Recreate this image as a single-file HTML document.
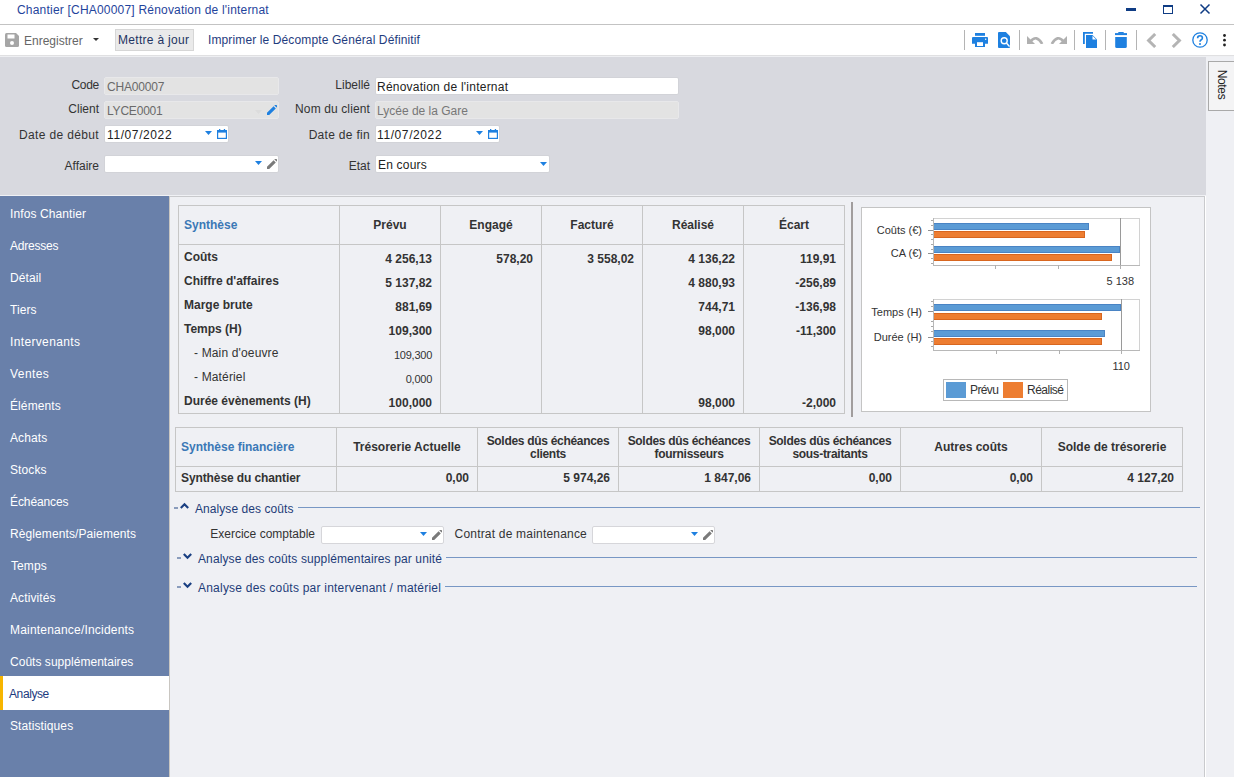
<!DOCTYPE html>
<html><head><meta charset="utf-8">
<style>
*{margin:0;padding:0;box-sizing:border-box}
html,body{width:1234px;height:777px;overflow:hidden;background:#fff;font-family:"Liberation Sans",sans-serif;font-size:12px;color:#333}
.a{position:absolute}
.t{position:absolute;white-space:nowrap}
.inp{position:absolute;height:17px;border:1px solid #d2d3d8;background:#fff;border-radius:2px}
.inp2{border-color:#d6d6da}
.dis{background:#e3e3e3;border-color:#e8e8ea}
</style></head><body>

<div class="t" style="top:3px;font-size:12px;line-height:14px;color:#1f449c;letter-spacing:0.2px;left:17px;">Chantier [CHA00007] Rénovation de l'internat</div>
<div class="a" style="left:1126px;top:8px;width:10px;height:3px;background:#0f3c84;"></div>
<div class="a" style="left:1163px;top:5px;width:10px;height:9px;border:1px solid #0f3c84;border-top-width:2px"></div>
<svg class="a" style="left:1199px;top:3px" width="12" height="12" viewBox="0 0 12 12"><path d="M1.5 1.5L10.5 10.5M10.5 1.5L1.5 10.5" stroke="#0f3c84" stroke-width="1.5"/></svg>
<div class="a" style="left:0px;top:24px;width:1234px;height:1px;background:#c3c3c3;"></div>
<svg class="a" style="left:5px;top:33px" width="14" height="14" viewBox="0 0 14 14"><path d="M0 1.5Q0 0 1.5 0H11L14 3V12.5Q14 14 12.5 14H1.5Q0 14 0 12.5Z" fill="#a6a6a6"/><rect x="2.5" y="1.5" width="7" height="4" fill="#fff"/><circle cx="7" cy="10" r="2" fill="#fff"/></svg>
<div class="t" style="top:34px;font-size:12px;line-height:14px;color:#666;left:24px;">Enregistrer</div>
<svg class="a" style="left:93px;top:38px" width="6" height="3" viewBox="0 0 6 3"><path d="M0 0H6L3 3Z" fill="#333"/></svg>
<div class="a" style="left:115px;top:29px;width:79px;height:22px;background:#eaeaea;border:1px solid #d6d6d6"></div>
<div class="t" style="top:33px;font-size:12px;line-height:14px;color:#1e3462;letter-spacing:0.3px;left:118px;">Mettre à jour</div>
<div class="t" style="top:33px;font-size:12px;line-height:14px;color:#1f3c7e;letter-spacing:0.12px;left:208px;">Imprimer le Décompte Général Définitif</div>
<div class="a" style="left:964px;top:30px;width:1px;height:20px;background:#b4b4b4;"></div>
<div class="a" style="left:1019px;top:30px;width:1px;height:20px;background:#b4b4b4;"></div>
<div class="a" style="left:1074px;top:30px;width:1px;height:20px;background:#b4b4b4;"></div>
<div class="a" style="left:1105px;top:30px;width:1px;height:20px;background:#b4b4b4;"></div>
<div class="a" style="left:1136px;top:30px;width:1px;height:20px;background:#b4b4b4;"></div>
<svg class="a" style="left:972px;top:33px" width="16" height="14" viewBox="0 0 16 14"><rect x="3" y="0" width="10" height="2.8" fill="#1e80e0"/><path d="M0 5Q0 4 1 4H15Q16 4 16 5V10.8H0Z" fill="#1e80e0"/><rect x="3" y="8" width="10" height="6" fill="#1e80e0"/><rect x="5" y="9.2" width="6" height="3.8" fill="#fff"/><rect x="13" y="5.5" width="1.3" height="1.5" fill="#d8e8f8"/></svg>
<svg class="a" style="left:998px;top:32px" width="12" height="16" viewBox="0 0 12 16"><path d="M0 1Q0 0 1 0H7.8L12 4.2V15Q12 16 11 16H1Q0 16 0 15Z" fill="#1e80e0"/><circle cx="6.2" cy="8.7" r="3" fill="none" stroke="#fff" stroke-width="1.4"/><path d="M8.4 10.9L11.6 14.6" stroke="#fff" stroke-width="1.5"/></svg>
<svg class="a" style="left:1027px;top:36px" width="17" height="8" viewBox="0 0 17 8"><path d="M0 0L0 8L8 8Z" fill="#b0b0b0"/><path d="M3.5 5.5Q9.5 -2 15.2 8" fill="none" stroke="#b0b0b0" stroke-width="2.6"/></svg>
<svg class="a" style="left:1050px;top:36px" width="17" height="8" viewBox="0 0 17 8"><path d="M17 0L17 8L9 8Z" fill="#b0b0b0"/><path d="M13.5 5.5Q7.5 -2 1.8 8" fill="none" stroke="#b0b0b0" stroke-width="2.6"/></svg>
<svg class="a" style="left:1083px;top:32px" width="14" height="16" viewBox="0 0 14 16"><path d="M0 0H10V1.7H1.8V12H0Z" fill="#1e80e0"/><path d="M3 3H9.5L14 7.5V16H3Z" fill="#1e80e0"/><path d="M9.5 3.8V7.5H13.2Z" fill="#fff"/></svg>
<svg class="a" style="left:1115px;top:32px" width="12" height="16" viewBox="0 0 12 16"><rect x="0" y="1.1" width="12" height="2" fill="#1e80e0"/><rect x="3.2" y="0" width="5.6" height="1.6" rx="0.6" fill="#1e80e0"/><path d="M0.2 5H11.8V14.5Q11.8 16 10.3 16H1.7Q0.2 16 0.2 14.5Z" fill="#1e80e0"/></svg>
<svg class="a" style="left:1146px;top:33px" width="11" height="15" viewBox="0 0 11 15"><path d="M9.2 1L2.6 7.5L9.2 14" fill="none" stroke="#b4b4b4" stroke-width="3"/></svg>
<svg class="a" style="left:1171px;top:33px" width="11" height="15" viewBox="0 0 11 15"><path d="M1.8 1L8.4 7.5L1.8 14" fill="none" stroke="#b4b4b4" stroke-width="3"/></svg>
<svg class="a" style="left:1192px;top:32px" width="16" height="16" viewBox="0 0 16 16"><circle cx="8" cy="8" r="7.2" fill="none" stroke="#1e80e0" stroke-width="1.3"/><path d="M5.6 6.2Q5.6 3.8 8 3.8Q10.4 3.8 10.4 6Q10.4 7.3 9 8Q8 8.6 8 9.8" fill="none" stroke="#1e80e0" stroke-width="1.6"/><circle cx="8" cy="12" r="1" fill="#1e80e0"/></svg>
<svg class="a" style="left:1221.5px;top:34px" width="5" height="13" viewBox="0 0 5 13"><circle cx="2.5" cy="1.5" r="1.4" fill="#222"/><circle cx="2.5" cy="6.2" r="1.4" fill="#222"/><circle cx="2.5" cy="11" r="1.4" fill="#222"/></svg>
<div class="a" style="left:0px;top:55px;width:1234px;height:1px;background:#e0e0e2;"></div>
<div class="a" style="left:0px;top:56px;width:1234px;height:1px;background:#eeeff2;"></div>
<div class="a" style="left:0px;top:57px;width:1206px;height:138px;background:#d8d9df;"></div>
<div class="a" style="left:1206px;top:57px;width:28px;height:720px;background:#eff0f4;"></div>
<div class="a" style="left:1208px;top:61px;width:30px;height:50px;background:#f4f4f5;border:1px solid #a9a9a9"></div>
<div class="t" style="left:1203px;top:77px;width:36px;height:15px;line-height:15px;transform:rotate(90deg);color:#222;font-size:12px;text-align:center;letter-spacing:-0.35px">Notes</div>
<div class="t" style="top:78px;font-size:12px;line-height:14px;color:#333;letter-spacing:-0.3px;left:9px;width:90px;text-align:right;">Code</div>
<div class="inp dis " style="left:104px;top:77px;width:175px;height:18px"></div>
<div class="t" style="top:80px;font-size:12px;line-height:14px;color:#6a6a6a;letter-spacing:-0.2px;left:107px;">CHA00007</div>
<div class="t" style="top:102px;font-size:12px;line-height:14px;color:#333;left:9px;width:90px;text-align:right;">Client</div>
<div class="inp dis " style="left:104px;top:101px;width:175px;height:18px"></div>
<div class="t" style="top:104px;font-size:12px;line-height:14px;color:#6a6a6a;letter-spacing:-0.2px;left:107px;">LYCE0001</div>
<svg class="a" style="left:267px;top:105px" width="10" height="10" viewBox="0 0 10 10"><path d="M0 10V7.8L6.6 1.2L8.8 3.4L2.2 10Z M7.4 0.4L8.2 -0.4Q8.6 -0.8 9 -0.4L10.4 1Q10.8 1.4 10.4 1.8L9.6 2.6Z" fill="#1e80e0"/></svg>
<svg class="a" style="left:255px;top:110px" width="7" height="4" viewBox="0 0 7 4"><path d="M0 0H7L3.5 4Z" fill="#dcdcdc"/></svg>
<div class="t" style="top:128px;font-size:12px;line-height:14px;color:#333;letter-spacing:0.35px;left:9px;width:90px;text-align:right;">Date de début</div>
<div class="inp " style="left:104px;top:125px;width:125px;height:18px"></div>
<div class="t" style="top:128px;font-size:12px;line-height:14px;color:#222;letter-spacing:0.6px;left:107px;">11/07/2022</div>
<svg class="a" style="left:205px;top:131px" width="7" height="4" viewBox="0 0 7 4"><path d="M0 0H7L3.5 4Z" fill="#1e80e0"/></svg>
<svg class="a" style="left:217px;top:129px" width="10" height="10" viewBox="0 0 10 10"><rect x="0.6" y="1.6" width="8.8" height="7.8" fill="none" stroke="#1e80e0" stroke-width="1.2"/><rect x="0" y="1" width="10" height="2.6" fill="#1e80e0"/><rect x="2" y="0" width="1.3" height="1.5" fill="#1e80e0"/><rect x="6.8" y="0" width="1.3" height="1.5" fill="#1e80e0"/></svg>
<div class="t" style="top:159px;font-size:12px;line-height:14px;color:#333;left:9px;width:90px;text-align:right;">Affaire</div>
<div class="inp " style="left:104px;top:155px;width:175px;height:18px"></div>
<svg class="a" style="left:255px;top:161px" width="7" height="4" viewBox="0 0 7 4"><path d="M0 0H7L3.5 4Z" fill="#1e80e0"/></svg>
<svg class="a" style="left:267px;top:159px" width="10" height="10" viewBox="0 0 10 10"><path d="M0 10V7.8L6.6 1.2L8.8 3.4L2.2 10Z M7.4 0.4L8.2 -0.4Q8.6 -0.8 9 -0.4L10.4 1Q10.8 1.4 10.4 1.8L9.6 2.6Z" fill="#7a7a7a"/></svg>
<div class="t" style="top:78px;font-size:12px;line-height:14px;color:#333;left:280px;width:90px;text-align:right;">Libellé</div>
<div class="inp " style="left:375px;top:77px;width:304px;height:18px"></div>
<div class="t" style="top:80px;font-size:12px;line-height:14px;color:#222;letter-spacing:0.23px;left:377px;">Rénovation de l'internat</div>
<div class="t" style="top:102px;font-size:12px;line-height:14px;color:#333;letter-spacing:0.12px;left:250px;width:120px;text-align:right;">Nom du client</div>
<div class="inp dis " style="left:375px;top:101px;width:304px;height:18px"></div>
<div class="t" style="top:104px;font-size:12px;line-height:14px;color:#777;left:377px;">Lycée de la Gare</div>
<div class="t" style="top:128px;font-size:12px;line-height:14px;color:#333;letter-spacing:0.3px;left:280px;width:90px;text-align:right;">Date de fin</div>
<div class="inp " style="left:375px;top:125px;width:125px;height:18px"></div>
<div class="t" style="top:128px;font-size:12px;line-height:14px;color:#222;letter-spacing:0.6px;left:377px;">11/07/2022</div>
<svg class="a" style="left:476px;top:131px" width="7" height="4" viewBox="0 0 7 4"><path d="M0 0H7L3.5 4Z" fill="#1e80e0"/></svg>
<svg class="a" style="left:488px;top:129px" width="10" height="10" viewBox="0 0 10 10"><rect x="0.6" y="1.6" width="8.8" height="7.8" fill="none" stroke="#1e80e0" stroke-width="1.2"/><rect x="0" y="1" width="10" height="2.6" fill="#1e80e0"/><rect x="2" y="0" width="1.3" height="1.5" fill="#1e80e0"/><rect x="6.8" y="0" width="1.3" height="1.5" fill="#1e80e0"/></svg>
<div class="t" style="top:159px;font-size:12px;line-height:14px;color:#333;left:280px;width:90px;text-align:right;">Etat</div>
<div class="inp " style="left:375px;top:155px;width:175px;height:18px"></div>
<div class="t" style="top:158px;font-size:12px;line-height:14px;color:#222;letter-spacing:0.2px;left:378px;">En cours</div>
<svg class="a" style="left:540px;top:162px" width="7" height="4" viewBox="0 0 7 4"><path d="M0 0H7L3.5 4Z" fill="#1e80e0"/></svg>
<div class="a" style="left:0px;top:195px;width:1206px;height:1px;background:#f0f1f5;"></div>
<div class="a" style="left:0px;top:196px;width:169px;height:581px;background:#6980aa;"></div>
<div class="a" style="left:169px;top:196px;width:1036px;height:581px;background:#eff0f4;border-top:1px solid #c9cacd;border-right:1px solid #c9cacd"></div>
<div class="a" style="left:169px;top:196px;width:1px;height:581px;background:#c9c6c1;"></div>
<div class="t" style="top:207px;font-size:12px;line-height:14px;color:#fff;letter-spacing:0.1px;left:10px;">Infos Chantier</div>
<div class="t" style="top:239px;font-size:12px;line-height:14px;color:#fff;letter-spacing:-0.21px;left:10px;">Adresses</div>
<div class="t" style="top:271px;font-size:12px;line-height:14px;color:#fff;letter-spacing:0.1px;left:10px;">Détail</div>
<div class="t" style="top:303px;font-size:12px;line-height:14px;color:#fff;letter-spacing:0.1px;left:10px;">Tiers</div>
<div class="t" style="top:335px;font-size:12px;line-height:14px;color:#fff;letter-spacing:0.35px;left:10px;">Intervenants</div>
<div class="t" style="top:367px;font-size:12px;line-height:14px;color:#fff;letter-spacing:0.43px;left:10px;">Ventes</div>
<div class="t" style="top:399px;font-size:12px;line-height:14px;color:#fff;letter-spacing:0.1px;left:10px;">Éléments</div>
<div class="t" style="top:431px;font-size:12px;line-height:14px;color:#fff;letter-spacing:0.1px;left:10px;">Achats</div>
<div class="t" style="top:463px;font-size:12px;line-height:14px;color:#fff;letter-spacing:0.1px;left:10px;">Stocks</div>
<div class="t" style="top:495px;font-size:12px;line-height:14px;color:#fff;letter-spacing:-0.1px;left:10px;">Échéances</div>
<div class="t" style="top:527px;font-size:12px;line-height:14px;color:#fff;letter-spacing:0.1px;left:10px;">Règlements/Paiements</div>
<div class="t" style="top:559px;font-size:12px;line-height:14px;color:#fff;letter-spacing:0.1px;left:11px;">Temps</div>
<div class="t" style="top:591px;font-size:12px;line-height:14px;color:#fff;letter-spacing:0.1px;left:10px;">Activités</div>
<div class="t" style="top:623px;font-size:12px;line-height:14px;color:#fff;letter-spacing:0.2px;left:10px;">Maintenance/Incidents</div>
<div class="t" style="top:655px;font-size:12px;line-height:14px;color:#fff;letter-spacing:0.03px;left:10px;">Coûts supplémentaires</div>
<div class="a" style="left:0px;top:676px;width:169px;height:34px;background:#fff;"></div>
<div class="a" style="left:0px;top:676px;width:3px;height:34px;background:#f7b500;"></div>
<div class="t" style="top:687px;font-size:12px;line-height:14px;color:#1c3a7e;letter-spacing:-0.4px;left:9px;">Analyse</div>
<div class="t" style="top:719px;font-size:12px;line-height:14px;color:#fff;letter-spacing:0.1px;left:10px;">Statistiques</div>
<div class="a" style="left:178px;top:205px;width:667px;height:209px;border:1px solid #c6c6c6"></div>
<div class="a" style="left:339px;top:205px;width:1px;height:209px;background:#c6c6c6;"></div>
<div class="a" style="left:440px;top:205px;width:1px;height:209px;background:#c6c6c6;"></div>
<div class="a" style="left:541px;top:205px;width:1px;height:209px;background:#c6c6c6;"></div>
<div class="a" style="left:642px;top:205px;width:1px;height:209px;background:#c6c6c6;"></div>
<div class="a" style="left:743px;top:205px;width:1px;height:209px;background:#c6c6c6;"></div>
<div class="a" style="left:178px;top:244px;width:667px;height:1px;background:#c6c6c6;"></div>
<div class="t" style="top:218px;font-size:12px;line-height:14px;color:#3b78b6;font-weight:bold;left:184px;">Synthèse</div>
<div class="t" style="top:218px;font-size:12px;line-height:14px;color:#333;font-weight:bold;left:340.0px;width:100px;text-align:center;">Prévu</div>
<div class="t" style="top:218px;font-size:12px;line-height:14px;color:#333;font-weight:bold;left:441.0px;width:100px;text-align:center;">Engagé</div>
<div class="t" style="top:218px;font-size:12px;line-height:14px;color:#333;font-weight:bold;left:542.0px;width:100px;text-align:center;">Facturé</div>
<div class="t" style="top:218px;font-size:12px;line-height:14px;color:#333;font-weight:bold;left:643.0px;width:100px;text-align:center;">Réalisé</div>
<div class="t" style="top:218px;font-size:12px;line-height:14px;color:#333;font-weight:bold;left:744.0px;width:100px;text-align:center;">Écart</div>
<div class="t" style="top:250px;font-size:12px;line-height:14px;color:#333;font-weight:bold;left:184px;">Coûts</div>
<div class="t" style="top:252px;font-size:12px;line-height:14px;color:#333;font-weight:bold;left:342px;width:90px;text-align:right;">4 256,13</div>
<div class="t" style="top:252px;font-size:12px;line-height:14px;color:#333;font-weight:bold;left:443px;width:90px;text-align:right;">578,20</div>
<div class="t" style="top:252px;font-size:12px;line-height:14px;color:#333;font-weight:bold;left:544px;width:90px;text-align:right;">3 558,02</div>
<div class="t" style="top:252px;font-size:12px;line-height:14px;color:#333;font-weight:bold;left:645px;width:90px;text-align:right;">4 136,22</div>
<div class="t" style="top:252px;font-size:12px;line-height:14px;color:#333;font-weight:bold;left:746px;width:90px;text-align:right;">119,91</div>
<div class="t" style="top:274px;font-size:12px;line-height:14px;color:#333;font-weight:bold;left:184px;">Chiffre d'affaires</div>
<div class="t" style="top:276px;font-size:12px;line-height:14px;color:#333;font-weight:bold;left:342px;width:90px;text-align:right;">5 137,82</div>
<div class="t" style="top:276px;font-size:12px;line-height:14px;color:#333;font-weight:bold;left:645px;width:90px;text-align:right;">4 880,93</div>
<div class="t" style="top:276px;font-size:12px;line-height:14px;color:#333;font-weight:bold;left:746px;width:90px;text-align:right;">-256,89</div>
<div class="t" style="top:298px;font-size:12px;line-height:14px;color:#333;font-weight:bold;left:184px;">Marge brute</div>
<div class="t" style="top:300px;font-size:12px;line-height:14px;color:#333;font-weight:bold;left:342px;width:90px;text-align:right;">881,69</div>
<div class="t" style="top:300px;font-size:12px;line-height:14px;color:#333;font-weight:bold;left:645px;width:90px;text-align:right;">744,71</div>
<div class="t" style="top:300px;font-size:12px;line-height:14px;color:#333;font-weight:bold;left:746px;width:90px;text-align:right;">-136,98</div>
<div class="t" style="top:322px;font-size:12px;line-height:14px;color:#333;font-weight:bold;left:184px;">Temps (H)</div>
<div class="t" style="top:324px;font-size:12px;line-height:14px;color:#333;font-weight:bold;left:342px;width:90px;text-align:right;">109,300</div>
<div class="t" style="top:324px;font-size:12px;line-height:14px;color:#333;font-weight:bold;left:645px;width:90px;text-align:right;">98,000</div>
<div class="t" style="top:324px;font-size:12px;line-height:14px;color:#333;font-weight:bold;left:746px;width:90px;text-align:right;">-11,300</div>
<div class="t" style="top:346px;font-size:12px;line-height:14px;color:#333;letter-spacing:0.15px;left:194px;">- Main d'oeuvre</div>
<div class="t" style="top:349px;font-size:11px;line-height:13px;color:#333;letter-spacing:-0.25px;left:342px;width:90px;text-align:right;">109,300</div>
<div class="t" style="top:370px;font-size:12px;line-height:14px;color:#333;letter-spacing:0.15px;left:194px;">- Matériel</div>
<div class="t" style="top:373px;font-size:11px;line-height:13px;color:#333;letter-spacing:-0.25px;left:342px;width:90px;text-align:right;">0,000</div>
<div class="t" style="top:394px;font-size:12px;line-height:14px;color:#333;font-weight:bold;left:184px;">Durée évènements (H)</div>
<div class="t" style="top:396px;font-size:12px;line-height:14px;color:#333;font-weight:bold;left:342px;width:90px;text-align:right;">100,000</div>
<div class="t" style="top:396px;font-size:12px;line-height:14px;color:#333;font-weight:bold;left:645px;width:90px;text-align:right;">98,000</div>
<div class="t" style="top:396px;font-size:12px;line-height:14px;color:#333;font-weight:bold;left:746px;width:90px;text-align:right;">-2,000</div>
<div class="a" style="left:851px;top:202px;width:2px;height:215px;background:#a19d9d;"></div>
<div class="a" style="left:861px;top:207px;width:290px;height:205px;border:1px solid #c4c4c4"></div>
<div class="a" style="left:862px;top:208px;width:288px;height:203px;background:#fff"></div>
<div class="a" style="left:933px;top:218px;width:207px;height:48px;border:1px solid #d2d2d2"></div>
<div class="a" style="left:933px;top:218px;width:1px;height:48px;background:#b8b8b8;"></div>
<div class="a" style="left:933px;top:265px;width:207px;height:1px;background:#b8b8b8;"></div>
<div class="a" style="left:934px;top:219px;width:205px;height:46px;background:#fff"></div>
<div class="a" style="left:1120px;top:218px;width:1px;height:48px;background:#9a9a9a;"></div>
<div class="a" style="left:934px;top:223px;width:155px;height:7px;background:#5b9bd5;border:1px solid #4a84c4;border-left:0"></div>
<div class="a" style="left:934px;top:231px;width:151px;height:7px;background:#ed7d31;border:1px solid #d8661f;border-left:0"></div>
<div class="a" style="left:934px;top:246px;width:186px;height:7px;background:#5b9bd5;border:1px solid #4a84c4;border-left:0"></div>
<div class="a" style="left:934px;top:254px;width:178px;height:7px;background:#ed7d31;border:1px solid #d8661f;border-left:0"></div>
<div class="a" style="left:995px;top:265px;width:1px;height:4px;background:#b0b0b0;"></div>
<div class="a" style="left:1058px;top:265px;width:1px;height:4px;background:#b0b0b0;"></div>
<div class="a" style="left:1120px;top:265px;width:1px;height:4px;background:#b0b0b0;"></div>
<div class="a" style="left:931px;top:220px;width:2px;height:1px;background:#a8a8a8;"></div>
<div class="a" style="left:931px;top:225px;width:2px;height:1px;background:#a8a8a8;"></div>
<div class="a" style="left:931px;top:234px;width:2px;height:1px;background:#a8a8a8;"></div>
<div class="a" style="left:931px;top:239px;width:2px;height:1px;background:#a8a8a8;"></div>
<div class="a" style="left:931px;top:244px;width:2px;height:1px;background:#a8a8a8;"></div>
<div class="a" style="left:931px;top:249px;width:2px;height:1px;background:#a8a8a8;"></div>
<div class="a" style="left:931px;top:258px;width:2px;height:1px;background:#a8a8a8;"></div>
<div class="a" style="left:931px;top:263px;width:2px;height:1px;background:#a8a8a8;"></div>
<div class="a" style="left:928px;top:230px;width:5px;height:1px;background:#909090;"></div>
<div class="a" style="left:928px;top:253px;width:5px;height:1px;background:#909090;"></div>
<div class="t" style="top:224px;font-size:11px;line-height:13px;color:#333;left:842px;width:80px;text-align:right;">Coûts (€)</div>
<div class="t" style="top:247px;font-size:11px;line-height:13px;color:#333;left:842px;width:80px;text-align:right;">CA (€)</div>
<div class="t" style="top:275px;font-size:11px;line-height:13px;color:#333;left:1074px;width:60px;text-align:right;">5 138</div>
<div class="a" style="left:933px;top:299px;width:207px;height:52px;border:1px solid #d2d2d2"></div>
<div class="a" style="left:933px;top:299px;width:1px;height:52px;background:#b8b8b8;"></div>
<div class="a" style="left:933px;top:350px;width:207px;height:1px;background:#b8b8b8;"></div>
<div class="a" style="left:934px;top:300px;width:205px;height:50px;background:#fff"></div>
<div class="a" style="left:1121px;top:299px;width:1px;height:52px;background:#9a9a9a;"></div>
<div class="a" style="left:934px;top:304px;width:187px;height:7px;background:#5b9bd5;border:1px solid #4a84c4;border-left:0"></div>
<div class="a" style="left:934px;top:313px;width:168px;height:7px;background:#ed7d31;border:1px solid #d8661f;border-left:0"></div>
<div class="a" style="left:934px;top:330px;width:171px;height:7px;background:#5b9bd5;border:1px solid #4a84c4;border-left:0"></div>
<div class="a" style="left:934px;top:338px;width:168px;height:7px;background:#ed7d31;border:1px solid #d8661f;border-left:0"></div>
<div class="a" style="left:996px;top:350px;width:1px;height:4px;background:#b0b0b0;"></div>
<div class="a" style="left:1059px;top:350px;width:1px;height:4px;background:#b0b0b0;"></div>
<div class="a" style="left:1121px;top:350px;width:1px;height:4px;background:#b0b0b0;"></div>
<div class="a" style="left:931px;top:301px;width:2px;height:1px;background:#a8a8a8;"></div>
<div class="a" style="left:931px;top:306px;width:2px;height:1px;background:#a8a8a8;"></div>
<div class="a" style="left:931px;top:311px;width:2px;height:1px;background:#a8a8a8;"></div>
<div class="a" style="left:931px;top:321px;width:2px;height:1px;background:#a8a8a8;"></div>
<div class="a" style="left:931px;top:326px;width:2px;height:1px;background:#a8a8a8;"></div>
<div class="a" style="left:931px;top:331px;width:2px;height:1px;background:#a8a8a8;"></div>
<div class="a" style="left:931px;top:341px;width:2px;height:1px;background:#a8a8a8;"></div>
<div class="a" style="left:931px;top:346px;width:2px;height:1px;background:#a8a8a8;"></div>
<div class="a" style="left:928px;top:311px;width:5px;height:1px;background:#909090;"></div>
<div class="a" style="left:928px;top:337px;width:5px;height:1px;background:#909090;"></div>
<div class="t" style="top:306px;font-size:11px;line-height:13px;color:#333;left:842px;width:80px;text-align:right;">Temps (H)</div>
<div class="t" style="top:331px;font-size:11px;line-height:13px;color:#333;left:842px;width:80px;text-align:right;">Durée (H)</div>
<div class="t" style="top:360px;font-size:11px;line-height:13px;color:#333;left:1070px;width:60px;text-align:right;">110</div>
<div class="a" style="left:943px;top:379px;width:125px;height:22px;border:1px solid #b8b8b8"></div>
<div class="a" style="left:946px;top:382px;width:20px;height:16px;background:#5b9bd5;"></div>
<div class="t" style="top:383px;font-size:12px;line-height:14px;color:#333;letter-spacing:-0.6px;left:970px;">Prévu</div>
<div class="a" style="left:1003px;top:382px;width:20px;height:16px;background:#ed7d31;"></div>
<div class="t" style="top:383px;font-size:12px;line-height:14px;color:#333;letter-spacing:-0.5px;left:1027px;">Réalisé</div>
<div class="a" style="left:175px;top:427px;width:1008px;height:65px;border:1px solid #c6c6c6"></div>
<div class="a" style="left:336px;top:427px;width:1px;height:65px;background:#c6c6c6;"></div>
<div class="a" style="left:477px;top:427px;width:1px;height:65px;background:#c6c6c6;"></div>
<div class="a" style="left:618px;top:427px;width:1px;height:65px;background:#c6c6c6;"></div>
<div class="a" style="left:759px;top:427px;width:1px;height:65px;background:#c6c6c6;"></div>
<div class="a" style="left:900px;top:427px;width:1px;height:65px;background:#c6c6c6;"></div>
<div class="a" style="left:1041px;top:427px;width:1px;height:65px;background:#c6c6c6;"></div>
<div class="a" style="left:175px;top:466px;width:1008px;height:1px;background:#c6c6c6;"></div>
<div class="t" style="top:440px;font-size:12px;line-height:14px;color:#3b78b6;font-weight:bold;left:181px;">Synthèse financière</div>
<div class="t" style="top:440px;font-size:12px;line-height:14px;color:#333;font-weight:bold;left:337.0px;width:140px;text-align:center;">Trésorerie Actuelle</div>
<div class="t" style="top:434px;font-size:12px;line-height:14px;color:#333;font-weight:bold;letter-spacing:-0.3px;left:478.0px;width:140px;text-align:center;">Soldes dûs échéances</div>
<div class="t" style="top:447px;font-size:12px;line-height:14px;color:#333;font-weight:bold;letter-spacing:-0.3px;left:478.0px;width:140px;text-align:center;">clients</div>
<div class="t" style="top:434px;font-size:12px;line-height:14px;color:#333;font-weight:bold;letter-spacing:-0.3px;left:619.0px;width:140px;text-align:center;">Soldes dûs échéances</div>
<div class="t" style="top:447px;font-size:12px;line-height:14px;color:#333;font-weight:bold;letter-spacing:-0.3px;left:619.0px;width:140px;text-align:center;">fournisseurs</div>
<div class="t" style="top:434px;font-size:12px;line-height:14px;color:#333;font-weight:bold;letter-spacing:-0.3px;left:760.0px;width:140px;text-align:center;">Soldes dûs échéances</div>
<div class="t" style="top:447px;font-size:12px;line-height:14px;color:#333;font-weight:bold;letter-spacing:-0.3px;left:760.0px;width:140px;text-align:center;">sous-traitants</div>
<div class="t" style="top:440px;font-size:12px;line-height:14px;color:#333;font-weight:bold;left:901.0px;width:140px;text-align:center;">Autres coûts</div>
<div class="t" style="top:440px;font-size:12px;line-height:14px;color:#333;font-weight:bold;left:1042.0px;width:140px;text-align:center;">Solde de trésorerie</div>
<div class="t" style="top:471px;font-size:12px;line-height:14px;color:#333;font-weight:bold;letter-spacing:-0.1px;left:181px;">Synthèse du chantier</div>
<div class="t" style="top:471px;font-size:12px;line-height:14px;color:#333;font-weight:bold;left:349px;width:120px;text-align:right;">0,00</div>
<div class="t" style="top:471px;font-size:12px;line-height:14px;color:#333;font-weight:bold;left:490px;width:120px;text-align:right;">5 974,26</div>
<div class="t" style="top:471px;font-size:12px;line-height:14px;color:#333;font-weight:bold;left:631px;width:120px;text-align:right;">1 847,06</div>
<div class="t" style="top:471px;font-size:12px;line-height:14px;color:#333;font-weight:bold;left:772px;width:120px;text-align:right;">0,00</div>
<div class="t" style="top:471px;font-size:12px;line-height:14px;color:#333;font-weight:bold;left:913px;width:120px;text-align:right;">0,00</div>
<div class="t" style="top:471px;font-size:12px;line-height:14px;color:#333;font-weight:bold;left:1054px;width:120px;text-align:right;">4 127,20</div>
<div class="a" style="left:174px;top:507px;width:4px;height:2px;background:#8a9cbc;"></div>
<svg class="a" style="left:180px;top:502px" width="9" height="7" viewBox="0 0 9 7"><path d="M0.8 6L4.5 2.2L8.2 6" fill="none" stroke="#1a3f82" stroke-width="2.1"/></svg>
<div class="t" style="top:502px;font-size:12px;line-height:14px;color:#1e3c78;letter-spacing:0.07px;left:195px;">Analyse des coûts</div>
<div class="a" style="left:298px;top:507px;width:902px;height:1px;background:#7897c4;"></div>
<div class="t" style="top:527px;font-size:12px;line-height:14px;color:#333;left:195px;width:120px;text-align:right;">Exercice comptable</div>
<div class="inp inp2" style="left:321px;top:526px;width:123px;height:18px"></div>
<svg class="a" style="left:420px;top:532px" width="7" height="4" viewBox="0 0 7 4"><path d="M0 0H7L3.5 4Z" fill="#1e80e0"/></svg>
<svg class="a" style="left:432px;top:530px" width="10" height="10" viewBox="0 0 10 10"><path d="M0 10V7.8L6.6 1.2L8.8 3.4L2.2 10Z M7.4 0.4L8.2 -0.4Q8.6 -0.8 9 -0.4L10.4 1Q10.8 1.4 10.4 1.8L9.6 2.6Z" fill="#7a7a7a"/></svg>
<div class="t" style="top:527px;font-size:12px;line-height:14px;color:#333;letter-spacing:0.2px;left:437px;width:150px;text-align:right;">Contrat de maintenance</div>
<div class="inp inp2" style="left:592px;top:526px;width:123px;height:18px"></div>
<svg class="a" style="left:691px;top:532px" width="7" height="4" viewBox="0 0 7 4"><path d="M0 0H7L3.5 4Z" fill="#1e80e0"/></svg>
<svg class="a" style="left:703px;top:530px" width="10" height="10" viewBox="0 0 10 10"><path d="M0 10V7.8L6.6 1.2L8.8 3.4L2.2 10Z M7.4 0.4L8.2 -0.4Q8.6 -0.8 9 -0.4L10.4 1Q10.8 1.4 10.4 1.8L9.6 2.6Z" fill="#7a7a7a"/></svg>
<div class="a" style="left:177px;top:557px;width:4px;height:2px;background:#8a9cbc;"></div>
<svg class="a" style="left:183px;top:553px" width="9" height="7" viewBox="0 0 9 7"><path d="M0.8 1L4.5 4.8L8.2 1" fill="none" stroke="#1a3f82" stroke-width="2.1"/></svg>
<div class="t" style="top:552px;font-size:12px;line-height:14px;color:#1e3c78;letter-spacing:0.12px;left:198px;">Analyse des coûts supplémentaires par unité</div>
<div class="a" style="left:446px;top:557px;width:751px;height:1px;background:#7897c4;"></div>
<div class="a" style="left:177px;top:586px;width:4px;height:2px;background:#8a9cbc;"></div>
<svg class="a" style="left:183px;top:582px" width="9" height="7" viewBox="0 0 9 7"><path d="M0.8 1L4.5 4.8L8.2 1" fill="none" stroke="#1a3f82" stroke-width="2.1"/></svg>
<div class="t" style="top:581px;font-size:12px;line-height:14px;color:#1e3c78;letter-spacing:0.22px;left:198px;">Analyse des coûts par intervenant / matériel</div>
<div class="a" style="left:445px;top:586px;width:752px;height:1px;background:#7897c4;"></div>
</body></html>
